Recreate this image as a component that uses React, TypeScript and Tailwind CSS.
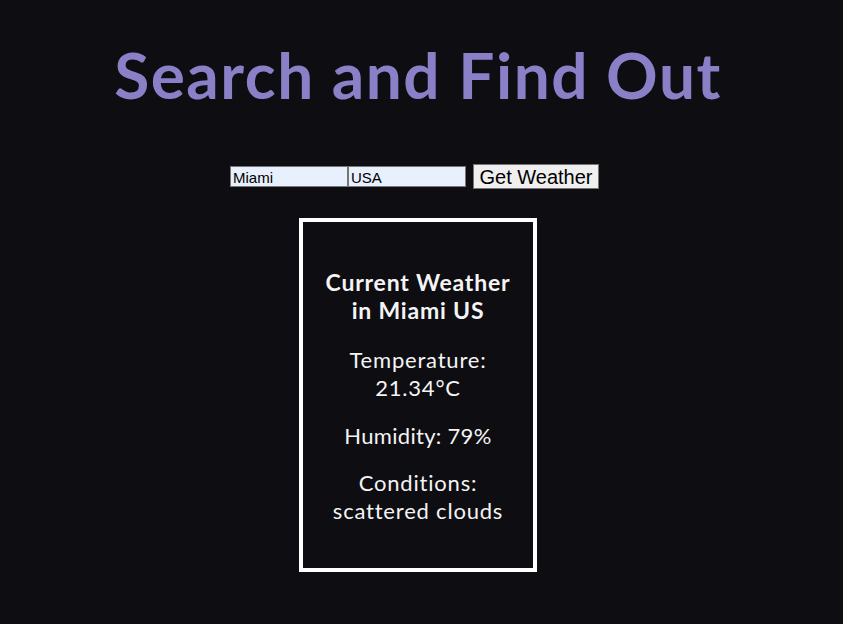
import React, { useState } from 'react';

const WeatherCard = ({ city, country }: { city: string; country: string }) => {
  return (
    <div className="mt-[29px] w-[238px] border-4 border-white px-2 pt-[46px] pb-[43px] text-center text-[#f4f4f4]">
      <h2 className="text-[23px] font-bold leading-[28px] tracking-[0.8px]">
        Current Weather
        <br />
        in {city} {country}
      </h2>
      <p className="mt-[22px] text-[22px] leading-[28px] tracking-[0.8px]">
        Temperature:
        <br />
        21.34°C
      </p>
      <p className="mt-[20px] text-[22px] leading-[28px] tracking-[0.3px]">Humidity: 79%</p>
      <p className="mt-[19px] text-[22px] leading-[28px] tracking-[0.8px]">
        Conditions:
        <br />
        scattered clouds
      </p>
    </div>
  );
};

export default function App() {
  const [city, setCity] = useState('Miami');
  const [country, setCountry] = useState('USA');

  return (
    <div
      className="flex min-h-[624px] flex-col items-center bg-[#0e0d12] pr-[7px]"
      style={{ fontFamily: '"Century Gothic", Lato, sans-serif' }}
    >
      <h1 className="mt-[40px] text-[64px] font-bold leading-[70px] tracking-[1.5px] text-[#8a80c8]">
        Search and Find Out
      </h1>
      <form className="mt-[54px] mr-[7px] flex items-center" onSubmit={(e) => e.preventDefault()}>
        <input
          value={city}
          onChange={(e) => setCity(e.target.value)}
          className="h-[21px] w-[118px] border border-[#767676] bg-[#e8f0fe] px-[2px] pt-[2px] text-[15px] leading-[17px] text-black outline-none"
          style={{ fontFamily: '"Liberation Sans", Arial, sans-serif' }}
        />
        <input
          value={country}
          onChange={(e) => setCountry(e.target.value)}
          className="h-[21px] w-[118px] border border-[#767676] bg-[#e8f0fe] px-[2px] pt-[2px] text-[15px] leading-[17px] text-black outline-none"
          style={{ fontFamily: '"Liberation Sans", Arial, sans-serif' }}
        />
        <button
          type="submit"
          className="ml-[7px] h-[25px] w-[126px] border border-[#767676] bg-[#efefef] text-[20px] leading-none text-black"
          style={{ fontFamily: '"Liberation Sans", Arial, sans-serif' }}
        >
          Get Weather
        </button>
      </form>
      <WeatherCard city="Miami" country="US" />
    </div>
  );
}
